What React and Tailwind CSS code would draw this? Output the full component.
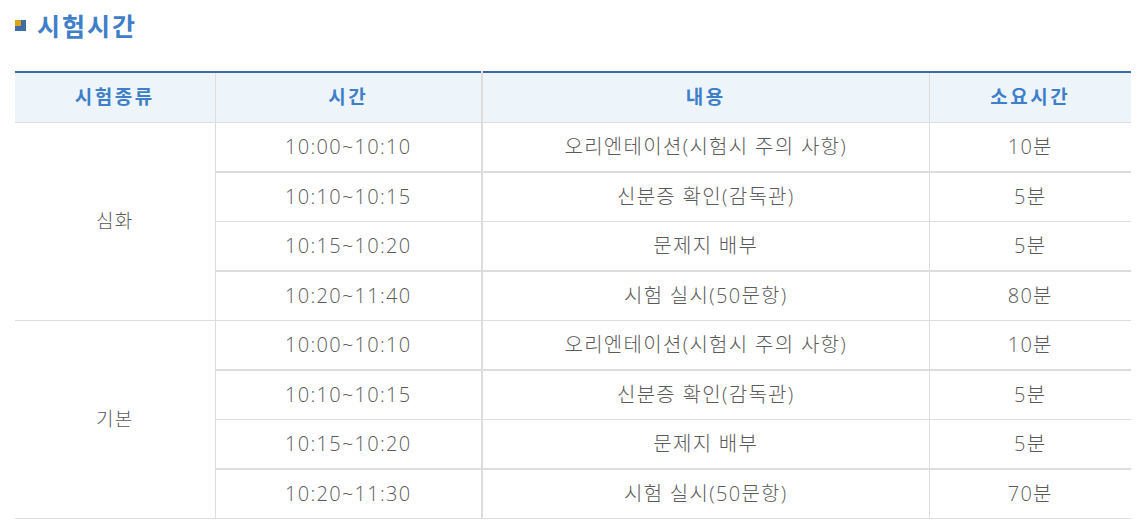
import React from 'react';

const groups = [
  {
    name: '심화',
    rows: [
      { time: '10:00~10:10', desc: '오리엔테이션(시험시 주의 사항)', dur: '10분' },
      { time: '10:10~10:15', desc: '신분증 확인(감독관)', dur: '5분' },
      { time: '10:15~10:20', desc: '문제지 배부', dur: '5분' },
      { time: '10:20~11:40', desc: '시험 실시(50문항)', dur: '80분' },
    ],
  },
  {
    name: '기본',
    rows: [
      { time: '10:00~10:10', desc: '오리엔테이션(시험시 주의 사항)', dur: '10분' },
      { time: '10:10~10:15', desc: '신분증 확인(감독관)', dur: '5분' },
      { time: '10:15~10:20', desc: '문제지 배부', dur: '5분' },
      { time: '10:20~11:30', desc: '시험 실시(50문항)', dur: '70분' },
    ],
  },
];

const font = { fontFamily: '"Open Sans", "Noto Sans CJK KR", sans-serif' };

const App = () => {
  return (
    <div className="min-h-screen bg-white pl-[15px] pr-[12px] pt-[8px]" style={font}>
      {/* Title */}
      <div className="flex items-center gap-[11px] h-[36px]">
        <span className="relative block w-[11px] h-[11px] bg-[#3f6ca6] -mt-[2px]">
          <span className="absolute left-0 top-0 w-[6px] h-[6px] bg-[#dba319]" />
        </span>
        <h2 className="text-[25px] font-bold text-[#3f7ec9] tracking-[2px] leading-none">시험시간</h2>
      </div>

      {/* Table */}
      <table className="mt-[27px] w-full border-collapse text-center">
        <thead>
          <tr className="h-[50px] bg-[#edf5fa] border-t-2 border-[#3d6aa4] text-[19px] font-bold text-[#3f7ec9] tracking-[2.5px]">
            <th className="w-[200px] border-b border-[#dddddd]">시험종류</th>
            <th className="w-[267px] border-b border-l border-[#dddddd]">시간</th>
            <th className="w-[447px] border-b border-l-2 border-[#dddddd]">내용</th>
            <th className="border-b border-l border-[#dddddd]">소요시간</th>
          </tr>
        </thead>
        <tbody>
          {groups.map((g) =>
            g.rows.map((r, i) => (
              <tr
                key={g.name + i}
                className={`${i % 2 === 0 ? 'h-[50px] border-b-2' : 'h-[49px] border-b'} border-[#dddddd] text-[20px] font-light text-[#5a5a5a] tracking-[1.3px]`}
              >
                {i === 0 && (
                  <td rowSpan={4} className="border-b border-[#dddddd] text-[19px]">
                    {g.name}
                  </td>
                )}
                <td className="border-l border-[#dddddd]">{r.time}</td>
                <td className="border-l-2 border-[#dddddd]">{r.desc}</td>
                <td className="border-l border-[#dddddd]">{r.dur}</td>
              </tr>
            ))
          )}
        </tbody>
      </table>
    </div>
  );
};

export default App;
